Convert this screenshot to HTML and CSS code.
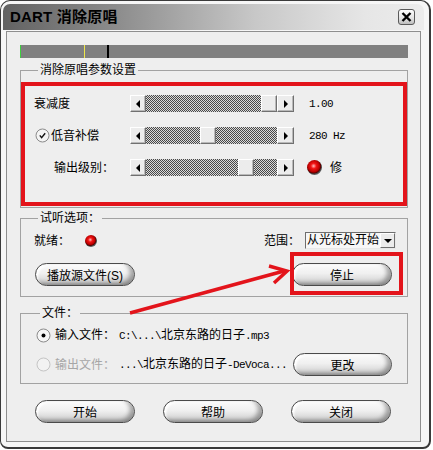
FILE: index.html
```html
<!DOCTYPE html>
<html lang="zh-CN">
<head>
    <meta charset="UTF-8">
    <title>DART 消除原唱</title>
    <link rel="stylesheet" href="styles.css">
</head>
<body>
    <div class="window">
        <div class="titlebar">
            <span class="title">DART 消除原唱</span>
            <button class="close-btn" type="button">
                <svg width="11" height="10" viewBox="0 0 11 10"><path d="M1.5 1 L9.5 9 M9.5 1 L1.5 9" stroke="#000" stroke-width="2.4" fill="none"/></svg>
            </button>
        </div>

        <div class="panel">
            <div class="level-bar">
                <span class="mark mark-green" style="left:0"></span>
                <span class="mark mark-yellow" style="left:64px"></span>
                <span class="mark mark-black" style="left:87px"></span>
            </div>

            <fieldset class="group group-params">
                <legend>消除原唱参数设置</legend>
                <div class="param-row">
                    <span class="param-label">衰减度</span>
                    <div class="slider">
                        <span class="arrow-btn left"></span>
                        <div class="track"><span class="spacer" style="width:115px"></span><span class="thumb"></span></div>
                        <span class="arrow-btn right"></span>
                    </div>
                    <span class="value mono">1.00</span>
                </div>
                <div class="param-row">
                    <span class="param-label check-label">
                        <svg class="check" width="15" height="15" viewBox="0 0 15 15"><circle cx="7.5" cy="7.5" r="6.5" fill="#f4f4f4" stroke="#8a8a8a"/><path d="M4.8 7.4 L6.6 9.6 L10.2 5.2" stroke="#111" stroke-width="1.4" fill="none"/></svg>低音补偿
                    </span>
                    <div class="slider">
                        <span class="arrow-btn left"></span>
                        <div class="track"><span class="spacer" style="width:54px"></span><span class="thumb"></span></div>
                        <span class="arrow-btn right"></span>
                    </div>
                    <span class="value mono">280 Hz</span>
                </div>
                <div class="param-row">
                    <span class="param-label indent">输出级别：</span>
                    <div class="slider">
                        <span class="arrow-btn left"></span>
                        <div class="track"><span class="spacer" style="width:92px"></span><span class="thumb"></span></div>
                        <span class="arrow-btn right"></span>
                    </div>
                    <span class="value led-value"><span class="led"></span><span class="xiu">修</span></span>
                </div>
            </fieldset>

            <fieldset class="group group-listen">
                <legend>试听选项：</legend>
                <div class="listen-row">
                    <span>就绪：</span>
                    <span class="led led-small"></span>
                    <span class="range-label">范围：</span>
                    <div class="combo">
                        <span class="combo-text">从光标处开始</span>
                        <span class="combo-btn"></span>
                    </div>
                </div>
                <div class="btn-row">
                    <button class="pill" type="button">播放源文件(S)</button>
                    <button class="pill" type="button">停止</button>
                </div>
            </fieldset>

            <fieldset class="group group-file">
                <legend>文件：</legend>
                <div class="file-row">
                    <svg class="radio" width="15" height="15" viewBox="0 0 15 15"><circle cx="7.5" cy="7.5" r="6.5" fill="#f6f6f6" stroke="#8a8a8a"/><circle cx="7.5" cy="7.5" r="2" fill="#000"/></svg>
                    <span class="file-label">输入文件：</span>
                    <span class="path"><span class="mono">C:\...\</span>北京东路的日子<span class="mono">.mp3</span></span>
                </div>
                <div class="file-row">
                    <svg class="radio" width="15" height="15" viewBox="0 0 15 15"><circle cx="7.5" cy="7.5" r="6.5" fill="#f2f2f2" stroke="#c4c4c4"/></svg>
                    <span class="file-label disabled">输出文件：</span>
                    <span class="path"><span class="mono">...\</span>北京东路的日子<span class="mono">-DeVoca...</span></span>
                    <button class="pill pill-change" type="button">更改</button>
                </div>
            </fieldset>

            <div class="footer">
                <button class="pill" type="button">开始</button>
                <button class="pill" type="button">帮助</button>
                <button class="pill" type="button">关闭</button>
            </div>
        </div>
    </div>

    <svg class="annotations" width="433" height="450" viewBox="0 0 433 450">
        <rect x="23" y="84" width="382" height="120" fill="none" stroke="#e3141b" stroke-width="4"/>
        <rect x="292" y="254" width="109" height="39" fill="none" stroke="#e3141b" stroke-width="4"/>
        <path d="M130 313 L284 271" stroke="#e3141b" stroke-width="3.5" fill="none"/>
        <path d="M269 266 L287 271 L274 283" stroke="#e3141b" stroke-width="3.5" fill="none" stroke-linejoin="miter"/>
    </svg>
</body>
</html>
```

FILE: styles.css
```css
/* General */
* {
    box-sizing: border-box;
}
body {
    margin: 0;
    width: 433px;
    height: 450px;
    overflow: hidden;
    position: relative;
    background: #fff;
    font-family: 'Liberation Sans', 'Noto Sans CJK SC', sans-serif;
    font-size: 12px;
    line-height: 16px;
    color: #000;
}
.mono {
    font-family: 'Liberation Mono', monospace;
    font-size: 11px;
    letter-spacing: -0.6px;
}

/* Window frame */
.window {
    width: 431px;
    height: 449px;
    display: flex;
    flex-direction: column;
    border: 1px solid #3a3a3a;
    border-right-width: 2px;
    border-bottom-width: 2px;
    border-radius: 10px 10px 8px 8px;
    padding: 3px 3px 5px 2px;
    background: #f6f6f6;
}
.titlebar {
    height: 26px;
    margin-right: 2px;
    display: flex;
    align-items: center;
    justify-content: space-between;
    padding: 0 9px 0 7px;
    border-radius: 7px 7px 0 0;
    background: linear-gradient(90deg, #626262, #8e8e8e 28%, #c8c8c8 60%, #e6e6e6 86%, #ececec);
}
.title {
    font-size: 15px;
    font-weight: bold;
    letter-spacing: 0.2px;
}
.close-btn {
    width: 17px;
    height: 16px;
    padding: 0;
    display: flex;
    align-items: center;
    justify-content: center;
    border: 1px solid #5a5a5a;
    border-radius: 3px;
    background: linear-gradient(#fdfdfd, #e2e2e2 60%, #bdbdbd);
}

/* Main panel */
.panel {
    flex: 1;
    margin: 1px 5px 0 3px;
    padding: 13px 12px 0 13px;
    border: 1px solid #8e8e8e;
    background: #eeeeee;
}
.level-bar {
    position: relative;
    height: 13px;
    background: #808080;
}
.mark {
    position: absolute;
    top: 0;
    width: 1px;
    height: 13px;
}
.mark-green { background: #3fcf3f; }
.mark-yellow { background: #f0e84a; }
.mark-black { background: #000; width: 2px; }

/* Group boxes */
.group {
    margin: 0;
    padding: 0;
    min-inline-size: 0;
    border: 1px solid #a2a2a2;
}
.group legend {
    margin-left: 4px;
    padding: 0 2px;
    line-height: 16px;
}
.group-params {
    margin-top: 4px;
    padding: 17px 0 31px 13px;
}
.group-listen {
    margin-top: 2px;
    padding: 6px 11px 10px 13px;
}
.group-file {
    margin-top: 8px;
    padding: 6px 15px 7px 15px;
}

/* Parameter sliders */
.param-row {
    display: grid;
    grid-template-columns: 96px 164px 1fr;
    align-items: center;
    height: 17px;
    margin-bottom: 15px;
}
.param-row:last-child {
    margin-bottom: 0;
}
.check-label {
    display: flex;
    align-items: center;
}
.check {
    margin-left: 1px;
    margin-right: 1px;
}
.indent {
    padding-left: 20px;
}
.slider {
    display: flex;
    height: 17px;
}
.arrow-btn,
.thumb {
    flex: none;
    width: 16px;
    height: 17px;
    background: #ececec;
    border: 1px solid;
    border-color: #fff #707070 #707070 #fff;
    box-shadow: inset -1px -1px 0 #b9b9b9;
}
.arrow-btn {
    display: flex;
    align-items: center;
    justify-content: center;
}
.arrow-btn.right {
    width: 17px;
}
.arrow-btn::after {
    content: "";
    border-top: 4px solid transparent;
    border-bottom: 4px solid transparent;
}
.arrow-btn.left::after {
    border-right: 4px solid #000;
}
.arrow-btn.right::after {
    border-left: 4px solid #000;
}
.track {
    flex: 1;
    display: flex;
    background: repeating-conic-gradient(#484848 0 25%, #dadada 0 50%) 0 0 / 2px 2px;
}
.spacer {
    flex: none;
}
.thumb {
    width: 16px;
}
.value {
    margin-left: 15px;
}
.led-value {
    display: flex;
    align-items: center;
    margin-left: 13px;
}
.xiu {
    margin-left: 8px;
}
.led {
    width: 15px;
    height: 15px;
    border-radius: 50%;
    background: radial-gradient(circle at 44% 40%, #ffc0c0 0, #f21414 22%, #b80000 48%, #5a0000 58%, #4a4a4a 64%, #9a9a9a 84%, #cfcfcf 100%);
}
.led-small {
    width: 12px;
    height: 12px;
    margin-left: 15px;
}

/* Listen options */
.listen-row {
    display: flex;
    align-items: center;
    height: 17px;
}
.range-label {
    margin-left: auto;
    margin-right: 5px;
}
.combo {
    display: flex;
    width: 91px;
    height: 17px;
    border: 1px solid;
    border-color: #6e6e6e #e8e8e8 #e8e8e8 #6e6e6e;
    background: #f7f7f7;
}
.combo-text {
    flex: 1;
    padding-left: 1px;
    line-height: 15px;
}
.combo-btn {
    width: 15px;
    display: flex;
    align-items: center;
    justify-content: center;
    background: #ececec;
    border: 1px solid;
    border-color: #fff #707070 #707070 #fff;
}
.combo-btn::after {
    content: "";
    border-left: 4px solid transparent;
    border-right: 4px solid transparent;
    border-top: 4px solid #000;
}
.btn-row {
    display: flex;
    justify-content: space-between;
    margin-top: 14px;
    padding: 0 4px 0 1px;
}

/* Pill buttons */
.pill {
    width: 100px;
    height: 23px;
    padding: 0;
    font-family: 'Liberation Sans', 'Noto Sans CJK SC', sans-serif;
    font-size: 12px;
    color: #000;
    border: 1px solid #4a4a4a;
    border-radius: 12px;
    background: linear-gradient(#fbfbfb, #f0f0f0 45%, #d8d8d8 80%, #c0c0c0);
    box-shadow: inset -4px -2px 4px rgba(0, 0, 0, 0.32), inset 2px 2px 2px #fff;
}

/* File rows */
.file-row {
    display: flex;
    align-items: center;
    height: 16px;
}
.file-row + .file-row {
    height: 23px;
    margin-top: 10px;
}
.file-label {
    margin-left: 4px;
    margin-right: 4px;
}
.file-label.disabled {
    color: #a6a6a6;
}
.pill-change {
    margin-left: auto;
    width: 99px;
}

/* Footer buttons */
.footer {
    display: flex;
    justify-content: space-between;
    margin-top: 16px;
    padding: 0 17px 0 15px;
}

/* Red annotations drawn over the dialog */
.annotations {
    position: absolute;
    top: 0;
    left: 0;
    pointer-events: none;
}
```
